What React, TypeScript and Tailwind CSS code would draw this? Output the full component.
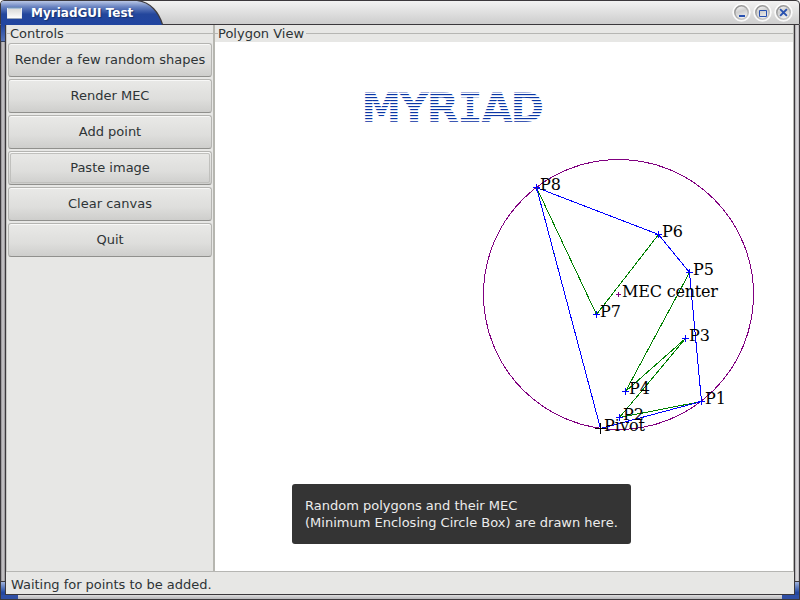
import React from "react";

const buttons: { label: string; focused?: boolean }[] = [
  { label: "Render a few random shapes" },
  { label: "Render MEC" },
  { label: "Add point" },
  { label: "Paste image", focused: true },
  { label: "Clear canvas" },
  { label: "Quit" },
];

type Point = { name: string; x: number; y: number; r?: number; color?: string };

const points: Point[] = [
  { name: "Pivot", x: 600, y: 428, r: 5, color: "#000000" },
  { name: "P1", x: 701, y: 401 },
  { name: "P2", x: 619, y: 417 },
  { name: "P3", x: 685, y: 338 },
  { name: "P4", x: 625, y: 391 },
  { name: "P5", x: 689, y: 272 },
  { name: "P6", x: 658, y: 234 },
  { name: "P7", x: 596, y: 314 },
  { name: "P8", x: 536, y: 187 },
];

const hull = [0, 1, 5, 6, 8];

const toPath = (indices: number[]) =>
  indices.map((i) => `${points[i].x + 0.5},${points[i].y + 0.5}`).join(" ");

const letters: { ch: string; x: number; w: number; mono?: boolean }[] = [
  { ch: "M", x: 361.5, w: 39.5 },
  { ch: "Y", x: 399, w: 30 },
  { ch: "R", x: 426.5, w: 32.5 },
  { ch: "I", x: 457.5, w: 25, mono: true },
  { ch: "A", x: 481.5, w: 31 },
  { ch: "D", x: 510.5, w: 33.5 },
];

const stripeRows = [2, 5, 8, 11, 14, 17, 20, 23, 26];

function Cross({ x, y, r = 3, color = "#0000ff" }: { x: number; y: number; r?: number; color?: string }) {
  return (
    <g fill={color}>
      <rect x={x - r} y={y} width={2 * r + 1} height={1} />
      <rect x={x} y={y - r} width={1} height={2 * r + 1} />
    </g>
  );
}

function Canvas() {
  return (
    <svg className="block" width={578} height={529} viewBox="215 42 578 529">
      <defs>
        <pattern id="stripes" x="0" y="92" width="10" height="30" patternUnits="userSpaceOnUse">
          <rect width="10" height="30" fill="#ffffff" />
          <rect width="10" height="1" y="0" fill="#a4aedb" />
          {stripeRows.map((y) => (
            <g key={y}>
              <rect width="10" height="1" y={y} fill="#0b37a5" />
              <rect width="10" height="1" y={y + 1} fill="#d9dff1" />
            </g>
          ))}
          <rect width="10" height="1" y="29" fill="#3d57b2" />
        </pattern>
      </defs>
      <g fill="url(#stripes)" fontSize="41" fontWeight="700">
        {letters.map((l) => (
          <text
            key={l.ch}
            x={l.x}
            y="122"
            textLength={l.w}
            lengthAdjust="spacingAndGlyphs"
            fontFamily={l.mono ? "'DejaVu Sans Mono', monospace" : "'DejaVu Sans', sans-serif"}
          >
            {l.ch}
          </text>
        ))}
      </g>
      <g shapeRendering="crispEdges" fill="none" strokeWidth="1">
        <circle cx="618.5" cy="294.5" r="135" stroke="#800080" />
        <polyline points={toPath([0, 1, 2, 3, 4, 5, 6, 7, 8, 0])} stroke="#008000" />
        <polygon points={toPath(hull)} stroke="#0000ff" />
        {points.map((p) => (
          <Cross key={p.name} x={p.x} y={p.y} r={p.r} color={p.color} />
        ))}
        <Cross x={618} y={294} r={2} color="#800080" />
      </g>
      <g fontFamily="'DejaVu Serif', serif" fontSize="16" fill="#000">
        {points.map((p) => (
          <text key={p.name} x={p.x + 4} y={p.y + 3}>
            {p.name}
          </text>
        ))}
        <text x="622" y="297" textLength="96">
          MEC center
        </text>
      </g>
    </svg>
  );
}

function WindowButton({ kind }: { kind: "min" | "max" | "close" }) {
  return (
    <svg width="21" height="21" viewBox="0 0 21 21">
      <defs>
        <linearGradient id={`rim-${kind}`} x1="0" y1="0" x2="0.6" y2="1">
          <stop offset="0" stopColor="#8b8b8b" />
          <stop offset="1" stopColor="#c6c6c6" />
        </linearGradient>
        <linearGradient id={`face-${kind}`} x1="0" y1="0" x2="0.3" y2="1">
          <stop offset="0" stopColor="#fafafa" />
          <stop offset="0.5" stopColor="#cfcfcf" />
          <stop offset="1" stopColor="#efefef" />
        </linearGradient>
      </defs>
      <circle cx="10.5" cy="10.5" r="9.2" fill="#ffffff" fillOpacity="0.85" />
      <circle cx="10.5" cy="10.5" r="6.7" fill={`url(#face-${kind})`} stroke={`url(#rim-${kind})`} strokeWidth="1.6" />
      {kind === "min" && <rect x="8" y="13" width="6" height="2" fill="#2851b0" />}
      {kind === "max" && <path d="M7.5 8.5H14.5V14.5H7.5Z" fill="none" stroke="#2851b0" />}
      {kind === "close" && (
        <path d="M7.8 7.8L13.2 13.2M13.2 7.8L7.8 13.2" stroke="#2851b0" strokeWidth="1.9" strokeLinecap="square" />
      )}
    </svg>
  );
}

function TitleBar() {
  return (
    <div className="relative flex h-[25px] shrink-0 items-center rounded-t-[4px] border border-[#3b383c] bg-linear-to-b from-[#f2f2f2] to-[#cdcdcd]">
      <svg className="absolute left-0 top-[-1px]" width="166" height="25">
        <defs>
          <linearGradient id="tab" x1="0" y1="0" x2="0" y2="1">
            <stop offset="0" stopColor="#b9c7e6" />
            <stop offset="0.25" stopColor="#6882c0" />
            <stop offset="0.55" stopColor="#23469c" />
            <stop offset="1" stopColor="#2145a0" />
          </linearGradient>
        </defs>
        <path d="M0 3L2 1H138C150 3 158 13 161.5 25H0Z" fill="url(#tab)" />
        <path d="M136 0.5C150 2 158 13 161.5 24.5" fill="none" stroke="#3b383c" strokeWidth="1.2" />
      </svg>
      <svg className="relative ml-1.5 mt-px" width="15" height="12" viewBox="0 0 15 12">
        <defs>
          <linearGradient id="icon" x1="0" y1="0" x2="0" y2="1">
            <stop offset="0" stopColor="#d5d5d2" />
            <stop offset="1" stopColor="#ffffff" />
          </linearGradient>
        </defs>
        <rect x="0.5" y="0.5" width="14" height="11" fill="url(#icon)" stroke="#e9edf2" />
        <rect width="15" height="1" fill="#6f8fb8" />
        <rect x="1" y="1" width="13" height="1" fill="#a9bdd6" />
        <rect y="11" width="15" height="1" fill="#9aa6bd" />
      </svg>
      <span className="relative ml-[9px] text-[12px] leading-4 font-bold text-white [text-shadow:1px_1px_1px_#14306e]">
        MyriadGUI Test
      </span>
      <div className="ml-auto mr-[5px] flex">
        <WindowButton kind="min" />
        <WindowButton kind="max" />
        <WindowButton kind="close" />
      </div>
    </div>
  );
}

function FrameTitle({ children }: { children: React.ReactNode }) {
  return (
    <div className="flex h-[17px] items-center">
      <span className="h-px w-[3px] bg-[#b6b6b3]" />
      <span className="mr-0.5 text-[13px] leading-[17px]">{children}</span>
      <span className="h-px flex-1 bg-[#b6b6b3]" />
    </div>
  );
}

function SideEdge({ side }: { side: "left" | "right" }) {
  return (
    <div
      className={`flex w-[5px] shrink-0 flex-col border-[#3b383c] ${
        side === "left"
          ? "border-l bg-linear-to-r from-[#8f8d90] via-[#cfcdd0] to-[#8f8d90]"
          : "border-r bg-linear-to-r from-[#a5a4a7] via-[#e6e4e7] to-[#b5b3b6]"
      }`}
    >
      {side === "left" && (
        <div className="h-[17px] border-b border-[#33405f] bg-linear-to-b from-[#2145a0] to-[#5573b8]" />
      )}
      <div className="flex-1" />
      <div className="h-[14px] border-t border-[#3b383c] bg-linear-to-b from-[#9fb2dc] to-[#2447a0] to-80%" />
    </div>
  );
}

export default function App() {
  return (
    <div className="relative flex h-[600px] w-[800px] flex-col overflow-hidden text-[#2e3436] [font-family:'DejaVu_Sans',sans-serif]">
      <TitleBar />
      <div className="flex h-[570px] shrink-0">
        <SideEdge side="left" />
        <div className="flex w-[790px] shrink-0 flex-col border-x border-b border-[#3b383c] bg-[#e7e7e5]">
          <div className="flex h-[547px] border-b border-[#b6b6b3]">
            <div className="flex w-[209px] flex-col border-l border-r-2 border-l-[#c4c4c1] border-r-[#b6b6b0]">
              <FrameTitle>Controls</FrameTitle>
              <div className="flex flex-col gap-0.5 px-px pt-px">
                {buttons.map((b) => (
                  <button
                    key={b.label}
                    className="relative h-[34px] w-full rounded-[3px] border border-[#b4b4b1] border-b-[#90908d] bg-linear-to-b from-[#e9e9e7] via-[#dededc] via-60% to-[#cececc] text-[13px] leading-4 whitespace-nowrap shadow-[inset_0_1px_0_#f8f8f7]"
                  >
                    {b.label}
                    {b.focused && (
                      <span className="absolute inset-px rounded-[2px] border border-[#c0c0bd]" />
                    )}
                  </button>
                ))}
              </div>
            </div>
            <div className="flex w-[579px] flex-col border-r border-[#b6b6b3]">
              <FrameTitle>Polygon View</FrameTitle>
              <div className="h-[529px] bg-white">
                <Canvas />
              </div>
            </div>
          </div>
          <div className="flex h-[22px] items-center pl-[5px] pt-[3px] text-[13px] leading-4 tracking-[-0.03px]">
            Waiting for points to be added.
          </div>
        </div>
        <SideEdge side="right" />
      </div>
      <div className="flex h-[5px] shrink-0 border-x border-b border-[#3b383c] bg-linear-to-b from-[#dededf] to-[#b5b5b8]">
        <div className="w-[17px] bg-[#2f4fa5]" />
        <div className="flex-1" />
        <div className="w-[17px] bg-[#2f4fa5]" />
      </div>
      <div className="absolute left-[292px] top-[484px] h-[60px] w-[339px] rounded-[3px] bg-[#343434] px-[13px] pt-[13px] text-[13px] leading-[17px] whitespace-nowrap text-[#ececec]">
        Random polygons and their MEC
        <br />
        (Minimum Enclosing Circle Box) are drawn here.
      </div>
    </div>
  );
}
